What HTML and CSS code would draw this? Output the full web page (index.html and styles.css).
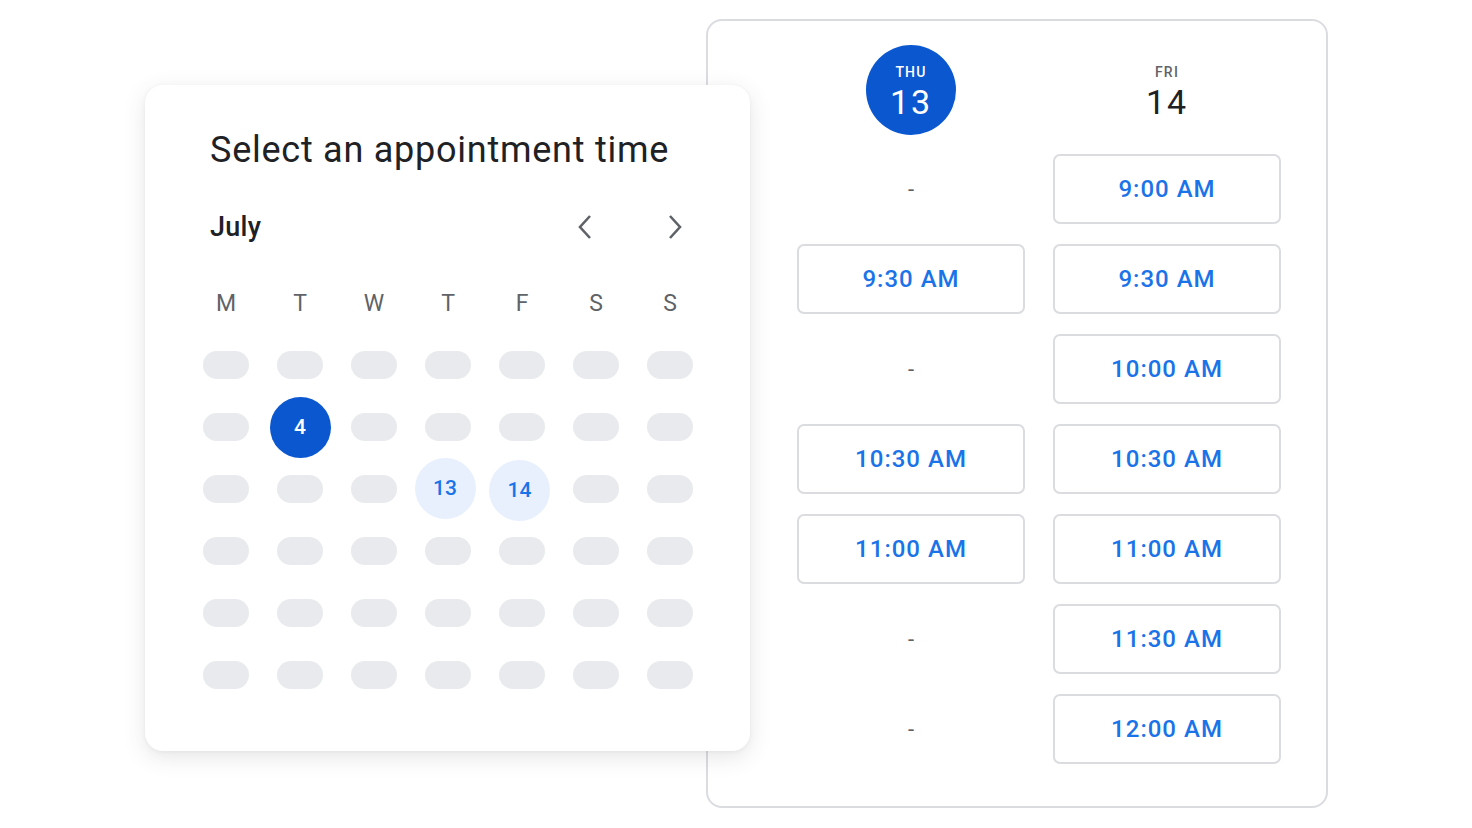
FILE: index.html
```html
<!DOCTYPE html>
<html>
<head>
<meta charset="utf-8">
<link rel="stylesheet" href="styles.css">
</head>
<body>
<div class="stage">
  <div class="card">
    <h1 class="title">Select an appointment time</h1>
    <div class="month-row">
      <span class="month">July</span>
      <div class="navs">
        <span class="nav"><svg width="16" height="26" viewBox="0 0 16 26"><polyline points="13,2 3,13 13,24" fill="none" stroke="#5f6368" stroke-width="2.6"/></svg></span>
        <span class="nav"><svg width="16" height="26" viewBox="0 0 16 26"><polyline points="3,2 13,13 3,24" fill="none" stroke="#5f6368" stroke-width="2.6"/></svg></span>
      </div>
    </div>
    <div class="cal">
      <div class="wd">M</div><div class="wd">T</div><div class="wd">W</div><div class="wd">T</div><div class="wd">F</div><div class="wd">S</div><div class="wd">S</div>

      <div class="cell"><span class="pill"></span></div><div class="cell"><span class="pill"></span></div><div class="cell"><span class="pill"></span></div><div class="cell"><span class="pill"></span></div><div class="cell"><span class="pill"></span></div><div class="cell"><span class="pill"></span></div><div class="cell"><span class="pill"></span></div>

      <div class="cell"><span class="pill"></span></div><div class="cell"><span class="day sel">4</span></div><div class="cell"><span class="pill"></span></div><div class="cell"><span class="pill"></span></div><div class="cell"><span class="pill"></span></div><div class="cell"><span class="pill"></span></div><div class="cell"><span class="pill"></span></div>

      <div class="cell"><span class="pill"></span></div><div class="cell"><span class="pill"></span></div><div class="cell"><span class="pill"></span></div><div class="cell"><span class="day avail shift-l">13</span></div><div class="cell"><span class="day avail shift-d">14</span></div><div class="cell"><span class="pill"></span></div><div class="cell"><span class="pill"></span></div>

      <div class="cell"><span class="pill"></span></div><div class="cell"><span class="pill"></span></div><div class="cell"><span class="pill"></span></div><div class="cell"><span class="pill"></span></div><div class="cell"><span class="pill"></span></div><div class="cell"><span class="pill"></span></div><div class="cell"><span class="pill"></span></div>

      <div class="cell"><span class="pill"></span></div><div class="cell"><span class="pill"></span></div><div class="cell"><span class="pill"></span></div><div class="cell"><span class="pill"></span></div><div class="cell"><span class="pill"></span></div><div class="cell"><span class="pill"></span></div><div class="cell"><span class="pill"></span></div>

      <div class="cell"><span class="pill"></span></div><div class="cell"><span class="pill"></span></div><div class="cell"><span class="pill"></span></div><div class="cell"><span class="pill"></span></div><div class="cell"><span class="pill"></span></div><div class="cell"><span class="pill"></span></div><div class="cell"><span class="pill"></span></div>
    </div>
  </div>

  <div class="panel">
    <div class="slots">
      <div class="head"><div class="date active"><span class="dow">THU</span><span class="dnum">13</span></div></div>
      <div class="head"><div class="date"><span class="dow">FRI</span><span class="dnum">14</span></div></div>

      <div class="slot empty">-</div><div class="slot btn">9:00 AM</div>
      <div class="slot btn">9:30 AM</div><div class="slot btn">9:30 AM</div>
      <div class="slot empty">-</div><div class="slot btn">10:00 AM</div>
      <div class="slot btn">10:30 AM</div><div class="slot btn">10:30 AM</div>
      <div class="slot btn">11:00 AM</div><div class="slot btn">11:00 AM</div>
      <div class="slot empty">-</div><div class="slot btn">11:30 AM</div>
      <div class="slot empty">-</div><div class="slot btn">12:00 AM</div>
    </div>
  </div>
</div>
</body>
</html>
```

FILE: styles.css
```css
* { box-sizing: border-box; }
html, body { margin: 0; padding: 0; background: #ffffff; }
body { font-family: Roboto, "Noto Sans", Arial, sans-serif; color: #202124; }

.stage {
  display: flex;
  align-items: flex-start;
  padding: 19px 0 0 145px;
  width: 1472px;
  height: 828px;
}

.card {
  position: relative;
  z-index: 2;
  width: 605px;
  height: 666px;
  margin-top: 66px;
  background: #fff;
  border-radius: 18px;
  box-shadow: 0 6px 22px rgba(60, 64, 67, 0.13), 0 1px 4px rgba(60, 64, 67, 0.06);
  padding: 44px 0 0 44px;
}

.title {
  margin: 0 0 0 21px;
  font-size: 36px;
  font-weight: 400;
  line-height: 42px;
  color: #202124;
  letter-spacing: 0.75px;
}

.month-row {
  display: flex;
  align-items: center;
  justify-content: space-between;
  margin: 41px 0 0 21px;
  width: 473px;
  height: 30px;
}
.month { font-size: 27px; font-weight: 500; color: #202124; letter-spacing: 0.3px; }
.navs { display: flex; gap: 74px; }
.nav { display: flex; width: 16px; height: 26px; }

.cal {
  margin-top: 30px;
  display: grid;
  grid-template-columns: repeat(7, 74px);
  grid-template-rows: repeat(7, 62px);
  width: 518px;
}
.wd {
  display: flex; align-items: center; justify-content: center;
  font-size: 23px; color: #5f6368;
}
.cell {
  display: flex; align-items: center; justify-content: center;
}
.pill {
  display: block;
  width: 46px; height: 28px;
  border-radius: 14px;
  background: #e8eaed;
}
.day {
  display: flex; align-items: center; justify-content: center;
  width: 61px; height: 61px; border-radius: 50%;
  font-size: 21px; font-weight: 500;
}
.day.sel { background: #0b57d0; color: #fff; }
.day.avail { background: #e8f0fe; color: #1a73e8; }
.day.shift-l { margin-left: -6px; margin-top: -2px; }
.day.shift-d { margin-left: -5px; margin-top: 2px; }

.panel {
  position: relative;
  z-index: 1;
  margin-left: -44px;
  width: 622px;
  height: 789px;
  border: 2px solid #dadce0;
  border-radius: 16px;
  background: #fff;
  padding: 24px 0 0 89px;
}

.slots {
  display: grid;
  grid-template-columns: repeat(2, 228px);
  grid-auto-rows: 70px;
  grid-template-rows: 89px;
  column-gap: 28px;
  row-gap: 20px;
}
.slots .head { height: 89px; display: flex; justify-content: center; }
.date {
  width: 90px; height: 90px; border-radius: 50%;
  display: flex; flex-direction: column; align-items: center; justify-content: flex-start;
  padding-top: 19px;
}
.date.active { background: #0b57d0; color: #fff; }
.dow { font-size: 14px; font-weight: 500; letter-spacing: 1.2px; line-height: 16px; color: #5f6368; }
.dnum { font-size: 34px; letter-spacing: 2px; line-height: 38px; color: #202124; margin-top: 3px; }
.date.active .dow, .date.active .dnum { color: #fff; }

.slot {
  display: flex; align-items: center; justify-content: center;
  height: 70px;
}
.slot.empty { color: #5f6368; font-size: 22px; }
.slot.btn {
  border: 2px solid #dadce0;
  border-radius: 7px;
  color: #1a73e8;
  font-size: 24px;
  font-weight: 500;
  letter-spacing: 1px;
  padding-bottom: 1px;
}
```
